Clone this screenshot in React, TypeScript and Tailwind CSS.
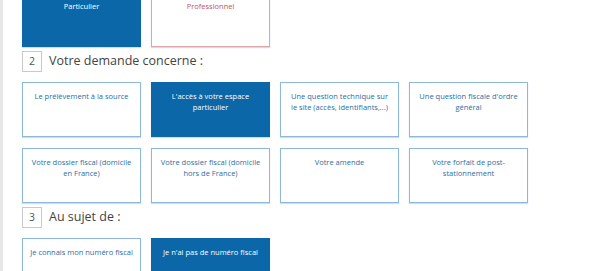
import React from "react";

type Kind = "default" | "selected" | "pro";

function Option({ label, kind = "default" }: { label: string; kind?: Kind }) {
  const styles: Record<Kind, string> = {
    default: "border-[#8db8da] bg-white text-[#2a6ea6]",
    selected: "border-[#0b67a7] bg-[#0b67a7] text-white",
    pro: "border-[#dba5ae] bg-white text-[#c4525f]",
  };
  return (
    <div
      className={`h-[55px] w-[119px] border px-[6.5px] pt-[8px] text-center text-[7.5px] leading-[10.7px] shadow-[0_1px_1px_rgba(120,160,200,0.35)] ${styles[kind]}`}
    >
      {label}
    </div>
  );
}

function Step({ n, title }: { n: number; title: string }) {
  return (
    <div className="mt-[4px] mb-[10px] flex items-center gap-[7px]">
      <div className="flex h-[21px] w-[20px] items-center justify-center border border-[#c9c9c9] text-[10.5px] text-[#555]">
        {n}
      </div>
      <span className="text-[12.5px] text-[#444]">{title}</span>
    </div>
  );
}

export default function App() {
  return (
    <div className="flex h-[271px] overflow-hidden bg-white font-['Open_Sans',sans-serif]">
      <div className="w-[3px] shrink-0 bg-[#e8e8e8]" />
      <div className="-mt-[8px] pl-[19px]">
        {/* Type de contribuable */}
        <div className="grid grid-cols-[repeat(4,119px)] gap-x-[10px]">
          <Option label="Particulier" kind="selected" />
          <Option label="Professionnel" kind="pro" />
        </div>

        <Step n={2} title="Votre demande concerne :" />
        <div className="grid grid-cols-[repeat(4,119px)] gap-x-[10px] gap-y-[11px]">
          <Option label="Le prélèvement à la source" />
          <Option label="L'accès à votre espace particulier" kind="selected" />
          <Option label="Une question technique sur le site (accès, identifiants,...)" />
          <Option label="Une question fiscale d'ordre général" />
          <Option label="Votre dossier fiscal (domicile en France)" />
          <Option label="Votre dossier fiscal (domicile hors de France)" />
          <Option label="Votre amende" />
          <Option label="Votre forfait de post-stationnement" />
        </div>

        <Step n={3} title="Au sujet de :" />
        <div className="grid grid-cols-[repeat(4,119px)] gap-x-[10px]">
          <Option label="Je connais mon numéro fiscal" />
          <Option label="Je n'ai pas de numéro fiscal" kind="selected" />
        </div>
      </div>
    </div>
  );
}
